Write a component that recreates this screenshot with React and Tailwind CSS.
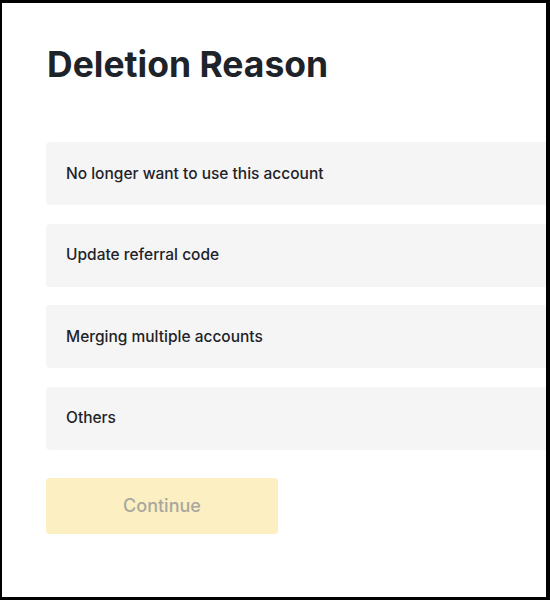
import React from "react";

const reasons = [
  "No longer want to use this account",
  "Update referral code",
  "Merging multiple accounts",
  "Others",
];

export default function App() {
  return (
    <div
      className="w-[550px] h-[600px] bg-black pt-[3px] pl-[2px] pr-[4px] pb-[3px]"
      style={{ fontFamily: "Inter, 'Noto Sans', sans-serif" }}
    >
      <div className="w-full h-full bg-white overflow-hidden pl-[44px] pt-[40px]">
        <h1 className="pl-[1px] text-[35.5px] leading-[44px] font-bold text-[#1e2329]">
          Deletion Reason
        </h1>
        <div className="mt-[55px] flex flex-col gap-[18.5px] w-[540px]">
          {reasons.map((r) => (
            <div
              key={r}
              className="h-[63px] bg-[#f5f5f5] rounded-[4px] flex items-center pl-[20px] text-[15.5px] font-medium text-[#1e2329]"
            >
              {r}
            </div>
          ))}
        </div>
        <button className="mt-[28px] w-[232px] h-[56px] rounded-[4px] bg-[#fcefc1] text-[18px] font-medium text-[#a8a8a0]">
          Continue
        </button>
      </div>
    </div>
  );
}
